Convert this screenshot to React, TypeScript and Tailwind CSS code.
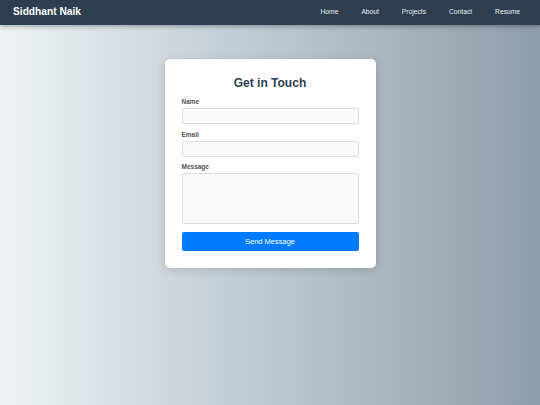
import React from "react";

export default function App() {
  const links = ["Home", "About", "Projects", "Contact", "Resume"];
  return (
    <div
      className="min-h-[405px] w-full bg-gradient-to-r from-[#eef2f3] to-[#8e9eab]"
      style={{ fontFamily: '"Liberation Sans", Arial, sans-serif' }}
    >
      <header className="relative z-10 flex h-[25px] items-center justify-between bg-[#2c3e50] pl-[13px] pr-[20px] shadow-[0_2px_4px_rgba(0,0,0,0.25)]">
        <div className="text-[10.2px] font-bold leading-none text-white">Siddhant Naik</div>
        <nav className="flex gap-[23px]">
          {links.map((l) => (
            <a key={l} className="text-[6.7px] leading-none text-[#ecf0f1]">
              {l}
            </a>
          ))}
        </nav>
      </header>
      <main className="flex justify-center pt-[33.5px]">
        <div className="w-[211px] rounded-[5px] bg-white px-[17px] pb-[17px] pt-[17px] shadow-[0_2px_10px_rgba(0,0,0,0.15)]">
          <h2 className="mb-[8px] text-center text-[12px] font-bold leading-[14px] text-[#2c3e50]">
            Get in Touch
          </h2>
          <div className="flex flex-col">
            <label className="mb-[2.5px] text-[6.5px] font-bold leading-[8px] text-[#555]">Name</label>
            <div className="h-[16px] rounded-[2px] border border-[#ddd] bg-[#f9f9f9]" />
            <label className="mb-[2.5px] mt-[6.5px] text-[6.5px] font-bold leading-[8px] text-[#555]">Email</label>
            <div className="h-[16px] rounded-[2px] border border-[#ddd] bg-[#f9f9f9]" />
            <label className="mb-[2px] mt-[6px] text-[6.5px] font-bold leading-[8px] text-[#555]">Message</label>
            <div className="h-[51px] rounded-[2px] border border-[#ddd] bg-[#f9f9f9]" />
            <button className="mt-[8px] flex h-[19px] items-center justify-center rounded-[2px] bg-[#007bff] text-[7.5px] leading-none text-white">
              Send Message
            </button>
          </div>
        </div>
      </main>
    </div>
  );
}
